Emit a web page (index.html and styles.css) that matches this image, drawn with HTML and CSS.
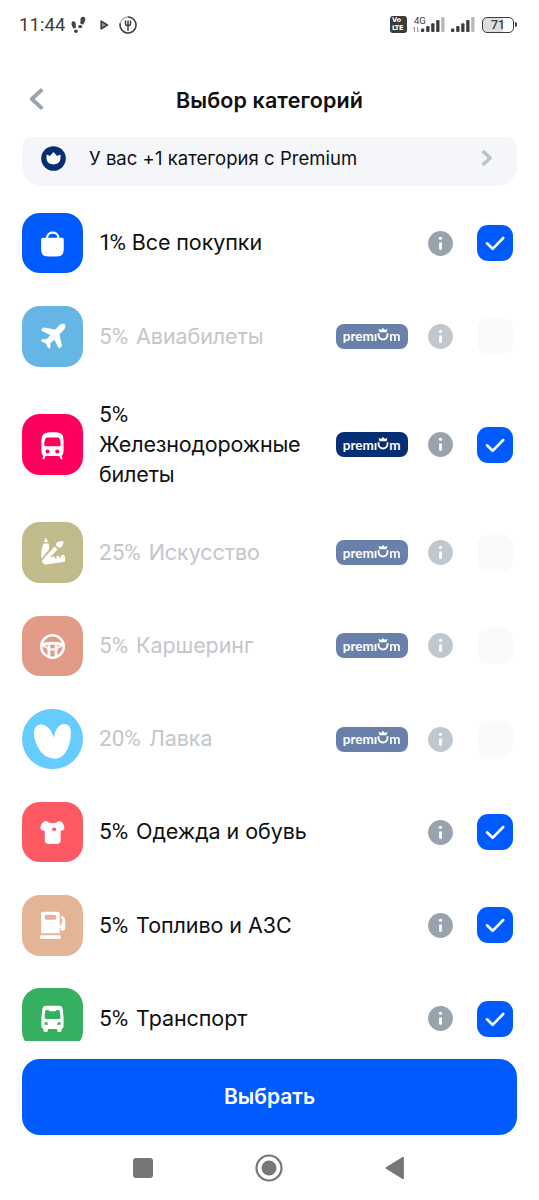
FILE: index.html
```html
<!DOCTYPE html>
<html lang="ru">
<head>
<meta charset="utf-8">
<title>Выбор категорий</title>
<link rel="stylesheet" href="styles.css">
</head>
<body>
<svg class="defs" width="0" height="0" aria-hidden="true">
  <symbol id="info" viewBox="0 0 25 25"><circle cx="12.5" cy="12.5" r="12.4" fill="#98a3af"/><circle cx="12.5" cy="7.3" r="1.6" fill="#fff"/><path d="M12.5 12.6v5" stroke="#fff" stroke-width="2.8" stroke-linecap="round"/></symbol>
  <symbol id="check" viewBox="0 0 36 36"><path d="M10 18.3l5.6 5.5L26.2 13" fill="none" stroke="#fff" stroke-width="2.6" stroke-linecap="round" stroke-linejoin="round"/></symbol>
  <symbol id="crown-u" viewBox="0 0 12 14"><path d="M1.5 5.200v1.600c0 6.300 9 6.300 9 0V5.200" fill="none" stroke="#fff" stroke-width="1.900"/><path d="M1.600.8l2.400 1.300L6 0l2 2.100L10.400.8 9.600 4.200H2.400z" fill="#fff"/></symbol>
</svg>
<div class="screen">
  <div class="status">
    <span class="time">11:44</span>
    <svg class="steps" width="15" height="18" viewBox="0 0 15 18" fill="#444"><path d="M.7 6.500C1.800 4.200 5 5.500 4.800 8.200L4.800 11.900 2.400 12.600C1.200 10.400 0 8.500.7 6.500z"/><ellipse cx="4.900" cy="15.200" rx="1.900" ry="1.700"/><path d="M9.600 2.200C10.900-.2 14.400.3 14.300 3c0 2.100-1.100 3.900-2.200 5.700L9.300 7.500z"/><ellipse cx="9.200" cy="10.600" rx="2" ry="1.700"/></svg>
    <svg class="play" width="9" height="10" viewBox="0 0 9 10"><path d="M1.200 1.200L7.400 5 1.200 8.800z" fill="#999" stroke="#444" stroke-width="1.700" stroke-linejoin="round"/></svg>
    <svg class="fork" width="18" height="18" viewBox="0 0 18 18" fill="none" stroke="#444"><circle cx="9" cy="9" r="8" stroke-width="1.300" stroke="#aaa"/><path d="M9 1a8 8 0 1 1-7.800 6.500" stroke-width="1.500"/><path d="M6.500 4.500v3.200c0 2.500 5 2.500 5 0V4.500M9 4.500V15" stroke-width="1.500"/></svg>
    <div class="status-right">
      <span class="volte"><span>Vo</span><span>LTE</span></span>
      <span class="net"><span>4G</span><svg width="8" height="5" viewBox="0 0 8 5"><path d="M2.500 5V0L.5 2M5.500 0v5l2-2" fill="none" stroke="#999" stroke-width=".9"/></svg></span>
      <svg class="signal" width="24" height="15" viewBox="0 0 24 15" fill="#3c3c3c"><rect x="0" y="11.500" width="3.300" height="3.500" rx="1"/><rect x="5.200" y="9" width="3.300" height="6" rx="1"/><rect x="10.200" y="6.200" width="3.300" height="8.800" rx="1"/><rect x="15.200" y="3" width="3.300" height="12" rx="1"/><rect x="20.200" y="0" width="3.300" height="15" rx="1" fill="#b8b8b8"/></svg>
      <svg class="signal second" width="24" height="15" viewBox="0 0 24 15" fill="#3c3c3c"><rect x="0" y="11.500" width="3.300" height="3.500" rx="1"/><rect x="5.200" y="9" width="3.300" height="6" rx="1"/><rect x="10.200" y="6.200" width="3.300" height="8.800" rx="1"/><rect x="15.200" y="3" width="3.300" height="12" rx="1"/><rect x="20.200" y="0" width="3.300" height="15" rx="1" fill="#b8b8b8"/></svg>
      <span class="battery">71</span><span class="battery-tip"></span>
    </div>
  </div>

  <header class="header">
    <svg width="17" height="24" viewBox="0 0 17 24"><path d="M14.300 2.300L3.800 12l10.500 9.700" fill="none" stroke="#9aa3ad" stroke-width="3.800" stroke-linejoin="round"/></svg>
    <h1>Выбор категорий</h1>
  </header>

  <main class="list">
    <div class="banner">
      <svg width="25" height="25" viewBox="0 0 25 25"><circle cx="12.500" cy="12.500" r="12.300" fill="#062e72"/><path d="M5.600 8.600l3.300 1.300L12.500 6l3.600 3.900 3.300-1.300c.6 5.700-.6 9.800-6.900 9.800s-7.500-4.100-6.900-9.800z" fill="#fff"/></svg>
      <span class="banner-text">У вас +1 категория с Premium</span>
      <svg class="chev" width="14" height="18" viewBox="0 0 14 18"><path d="M2.500 2l7.700 7-7.700 7" fill="none" stroke="#bcc2c9" stroke-width="3.500" stroke-linejoin="round"/></svg>
    </div>

    <div class="row">
      <div class="tile blue"><svg viewBox="0 0 60 60"><path d="M25 26v-1.800c0-6.200 11-6.200 11 0V26" fill="none" stroke="#fff" stroke-width="2.200"/><path d="M19 26.500c0-1 .8-1.800 1.800-1.800h18.900c1 0 1.800.8 1.800 1.800v9c0 6-2.300 7.700-7.300 7.700h-7.900c-5 0-7.300-1.700-7.300-7.700z" fill="#fff"/></svg></div>
      <span class="label"><span class="pct one">1%</span> Все покупки</span>
      <svg class="info"><use href="#info"/></svg>
      <span class="box on"><svg><use href="#check"/></svg></span>
    </div>
    <div class="row off">
      <div class="tile sky"><svg viewBox="0 0 60 60"><path d="M42.300 18.300c1.100 1.200.4 4-1.300 5.700L37 28l2.300 11.200c.2 1-1.600 3-2.800 2.300L32.200 33l-4.400 4.200.2 3.600c0 .7-1.300 1.600-1.800.9l-2-4.500-4.600-2.200c-.8-.6.3-1.900 1-1.900l3.700.3 4.200-4.500-8.700-4.400c-.8-1 1.200-3 2.200-2.800L33 23.800l3.800-4.100c1.600-1.700 4.300-2.500 5.500-1.400z" fill="#fff" stroke="#fff" stroke-width=".6"/></svg></div>
      <span class="label"><span class="pct">5%</span> Авиабилеты</span>
      <span class="badge"><span>premı</span><svg><use href="#crown-u"/></svg><span>m</span></span>
      <svg class="info"><use href="#info"/></svg>
      <span class="box"></span>
    </div>
    <div class="row">
      <div class="tile pink"><svg viewBox="0 0 60 60"><path fill="#fff" fill-rule="evenodd" d="M22 19.500c4-1.800 13-1.800 17 0 1.500.7 2 3 2.300 7v9.500c0 2.700-.6 5.700-3.300 5.700H22.600c-2.700 0-3.300-3-3.300-5.700v-9.500c.3-4 1.200-6.300 2.700-7zM24.800 23.300c-1.700 0-2.700 4.200-2.700 6.700 0 1.200.5 2 1.600 2h13.200c1.100 0 1.600-.8 1.600-2 0-2.500-1-6.700-2.700-6.700zM25.400 35.200a2 2 0 1 0 0 4 2 2 0 0 0 0-4zM35 35.200a2 2 0 1 0 0 4 2 2 0 0 0 0-4z"/><path d="M22.700 41l-1.300 3M38 41l1.200 3" stroke="#fff" stroke-width="2" stroke-linecap="round"/></svg></div>
      <span class="label tight"><span class="pct">5%</span> Железнодорожные билеты</span>
      <span class="badge"><span>premı</span><svg><use href="#crown-u"/></svg><span>m</span></span>
      <svg class="info"><use href="#info"/></svg>
      <span class="box on"><svg><use href="#check"/></svg></span>
    </div>
    <div class="row off">
      <div class="tile olive"><svg viewBox="0 0 60 60" fill="#fff"><path d="M23.700 15.500l1.900 3.200-.2 1.500h-3l-.3-1.500zM21.400 21.300l5.300.1.200 5.800-7.400 9c-.9-4-.2-10.800 1.900-14.900z"/><path d="M41 18.800c.3 3.900-1.200 6.900-4.800 6.900l-2.600-2.800c.4-3.500 3.800-3.800 7.400-4.100z"/><path d="M32.300 24.300l3 3-7.500 7.900 4-.8 1.100 1.900 1.500-.3v-2.300l2-.3.7 2.200 1.500-.3v-2.200l3-.4c1.400 1 1.700 5.300.9 6.800l-18.500 2.800c-2.300.3-4.100-1.900-4.200-4z"/></svg></div>
      <span class="label"><span class="pct">25%</span> Искусство</span>
      <span class="badge"><span>premı</span><svg><use href="#crown-u"/></svg><span>m</span></span>
      <svg class="info"><use href="#info"/></svg>
      <span class="box"></span>
    </div>
    <div class="row off">
      <div class="tile salmon"><svg viewBox="0 0 60 60" fill="none" stroke="#fff"><circle cx="30.300" cy="30.300" r="11.200" stroke-width="2.500"/><path d="M20.300 28.500c6-1.700 14-1.700 20 0" stroke-width="3"/><path d="M26.800 29v11.800M33.800 29v11.800" stroke-width="2.800"/><path d="M21 30c3 .5 5.500 2 5.500 5M39.600 30c-3 .5-5.500 2-5.500 5" stroke-width="1.500"/><circle cx="30.300" cy="30.500" r="1.900" fill="#e29b86" stroke="none"/><path d="M28 33.200h4.600" stroke-width="2"/></svg></div>
      <span class="label"><span class="pct">5%</span> Каршеринг</span>
      <span class="badge"><span>premı</span><svg><use href="#crown-u"/></svg><span>m</span></span>
      <svg class="info"><use href="#info"/></svg>
      <span class="box"></span>
    </div>
    <div class="row off">
      <div class="tile round"><svg viewBox="0 0 60 60"><path d="M31.700 28.500c-2-6.500-6-12.500-12-13.100-5.500-.6-8 4-7.800 9 .4 8.300 6 24.500 20.400 24.900C43.600 49.600 48.300 35 48.600 24c.1-5.400-2.200-9.200-6.700-9-6 .2-9.200 6.500-10.200 13.500z" fill="#fff"/></svg></div>
      <span class="label"><span class="pct">20%</span> Лавка</span>
      <span class="badge"><span>premı</span><svg><use href="#crown-u"/></svg><span>m</span></span>
      <svg class="info"><use href="#info"/></svg>
      <span class="box"></span>
    </div>
    <div class="row">
      <div class="tile red"><svg viewBox="0 0 60 60"><path d="M24.500 19c1.800 2.700 10 2.700 11.800 0 2.700-.3 4.800 1.800 5.800 6 .2 1.500-.3 2.700-2.200 3.200l-1.500.3v9c0 3-1.400 4.200-4.200 4.200h-7.400c-2.800 0-4.200-1.200-4.200-4.200v-9l-1.900-.3c-1.900-.5-2.600-1.700-2.300-3.200.8-4 3.400-6.300 6.100-6z" fill="#fff"/><rect x="30" y="25.600" width="4" height="3" rx="1" fill="#ff5963"/></svg></div>
      <span class="label"><span class="pct">5%</span> Одежда и обувь</span>
      <svg class="info"><use href="#info"/></svg>
      <span class="box on"><svg><use href="#check"/></svg></span>
    </div>
    <div class="row">
      <div class="tile sand"><svg viewBox="0 0 60 60"><path fill="#fff" fill-rule="evenodd" d="M21 16.700h14.300c1.300 0 2.200.9 2.200 2.200V38H19V18.900c0-1.300.7-2.200 2-2.200zM24.500 19.500c-1.300 0-2 .8-2 2v1.200c0 1.200.7 2 2 2h7.600c1.300 0 2-.8 2-2v-1.200c0-1.200-.7-2-2-2z"/><rect x="18" y="40.100" width="20.400" height="3.600" rx=".6" fill="#fff"/><path d="M39 20.600c3.400 1.200 4 3.200 4 7v5c0 2-1.300 2.900-2.700 2.900s-2-1-1.800-2.700v-4.500l1.500-.3v-4l-1.300-1.500zM37 31h1.800v1.500H37z" fill="#fff"/></svg></div>
      <span class="label"><span class="pct">5%</span> Топливо и АЗС</span>
      <svg class="info"><use href="#info"/></svg>
      <span class="box on"><svg><use href="#check"/></svg></span>
    </div>
    <div class="row">
      <div class="tile green"><svg viewBox="0 0 60 60"><path fill="#fff" fill-rule="evenodd" d="M24.500 17.700h11.700c3 0 4 1 4.400 4.300l.7 7v8.500c0 1.700-.6 2.700-2 3v1.800c0 .9-.5 1.400-1.400 1.400h-1.600c-.9 0-1.400-.5-1.400-1.400v-1.600h-9.200v1.600c0 .9-.5 1.400-1.400 1.400h-1.600c-.9 0-1.400-.5-1.400-1.400v-1.800c-1.400-.3-2-1.300-2-3V29l.8-7c.4-3.300 1.400-4.300 4.400-4.300zM24 21.800c-.8 0-1.500 4.200-1.500 6.700 0 1.500.6 2.300 2 2.300h11.700c1.400 0 2-.8 2-2.300 0-2.500-.7-6.700-1.500-6.700h-2.400c-.3 1-.8 1.200-1.700 1.200h-4.500c-.9 0-1.400-.2-1.700-1.200zM22.300 34v2.400h3.700L25 34zM38.400 34v2.400h-3.700l1-2.400z"/></svg></div>
      <span class="label"><span class="pct">5%</span> Транспорт</span>
      <svg class="info"><use href="#info"/></svg>
      <span class="box on"><svg><use href="#check"/></svg></span>
    </div>
  </main>

  <button class="submit">Выбрать</button>

  <nav class="nav">
    <svg width="20" height="20" viewBox="0 0 20 20"><rect width="20" height="20" rx="3" fill="#777"/></svg>
    <svg width="28" height="28" viewBox="0 0 28 28"><circle cx="14" cy="14" r="12.500" fill="none" stroke="#777" stroke-width="2.200"/><circle cx="14" cy="14" r="7.500" fill="#777"/></svg>
    <svg width="20" height="24" viewBox="0 0 20 24"><path d="M1.500 12L18 1.800v20.400z" fill="#777" stroke="#777" stroke-width="1.800" stroke-linejoin="round"/></svg>
  </nav>
</div>
</body>
</html>
```
FILE: styles.css
```css
* { box-sizing: border-box; }
body { margin: 0; background: #fff; font-family: Inter, Roboto, sans-serif; color: #101010; }
.defs { position: absolute; }
svg { display: block; flex: none; }
.screen { width: 539px; height: 1200px; display: flex; flex-direction: column; overflow: hidden; }

.status { height: 49px; padding: 0 22px 0 19px; display: flex; align-items: center; color: #3c3c3c; font-family: Roboto, sans-serif; }
.time { width: 47px; font-size: 18.5px; letter-spacing: 0.1px; }
.steps { margin-left: 5px; }
.play { margin-left: 14px; }
.fork { margin-left: 10px; }
.status-right { margin-left: auto; display: flex; align-items: center; }
.volte { width: 17px; height: 17px; border-radius: 3px; background: #3c3c3c; color: #fff; display: flex; flex-direction: column; justify-content: center; padding-left: 2px; font: 700 6.500px/7.500px "DejaVu Sans", sans-serif; letter-spacing: -0.3px; }
.net { width: 8px; height: 20px; margin-left: 5px; font-size: 9.5px; line-height: 12px; white-space: nowrap; }
.net span { display: block; padding-left: 2px; }
.signal { margin-left: 1px; }
.signal.second { margin-left: 6px; }
.battery { margin-left: 7px; width: 32px; height: 16px; border: 1.6px solid #3c3c3c; border-radius: 5px; background: linear-gradient(90deg, #dedede 68%, #fff 68%); font: 500 12.500px/13.500px Roboto, sans-serif; text-align: center; }
.battery-tip { width: 2px; height: 5px; margin-left: 1px; background: #3c3c3c; border-radius: 0 2px 2px 0; }

.header { height: 88px; padding: 14px 28px 0; display: grid; grid-template-columns: 17px 1fr 17px; align-items: start; }
.header svg { margin-top: 24px; }
.header h1 { margin: 22px 0 0; font-size: 21.500px; line-height: 30px; font-weight: 600; letter-spacing: 0.100px; text-align: center; white-space: nowrap; }

.list { height: 903.5px; flex: none; overflow: hidden; padding: 0 22px; }
.banner { height: 54.5px; margin: -6px 0 27.500px; padding: 0 23px 0 19px; border-radius: 20px; background: #f5f6fa; display: flex; align-items: center; }
.banner-text { flex: 1; margin-left: 23px; font-size: 18.500px; letter-spacing: 0.030px; white-space: nowrap; }
.row { min-height: 60.4px; margin-bottom: 32.8px; padding-right: 4px; display: flex; align-items: center; }
.tile { width: 60.5px; height: 60.4px; flex: none; border-radius: 18px; }
.tile svg { width: 60.4px; height: 60.4px; }
.blue { background: #005bff; }
.sky { background: #66b6e5; }
.pink { background: #ff005f; }
.olive { background: #c1ba8a; }
.salmon { background: #e29b86; }
.round { background: #66ccff; border-radius: 50%; }
.red { background: #ff5963; }
.sand { background: #e3b496; }
.green { background: #35b060; }
.label { flex: 1; min-width: 0; margin: -0.8px 0 0.8px 16.500px; padding-right: 16px; font-size: 21.500px; line-height: 30.1px; letter-spacing: -0.080px; }
.label.tight { letter-spacing: -0.180px; }
.pct { margin-right: 2px; font-family: Roboto, sans-serif; font-size: 22.500px; line-height: 1; letter-spacing: 0; }
.pct.one { letter-spacing: -2.200px; }
.off .label { color: #c3c6cb; }
.badge { width: 72px; height: 25px; flex: none; border-radius: 8px; background: #062e72; color: #fff; display: flex; align-items: center; justify-content: center; font: 700 13.500px/20px Lato, sans-serif; }
.badge svg { width: 12px; height: 14px; margin-top: -2px; }
.info { width: 25px; height: 25px; margin: 0 24.300px 0 20px; }
.off .info, .off .badge { opacity: 0.6; }
.box { width: 36px; height: 36px; flex: none; border-radius: 11px; background: #f9fafc; }
.box.on { background: #005bff; }
.box svg { width: 36px; height: 36px; }

.submit { height: 76.500px; flex: none; margin: 18px 22px 0; padding: 0; border: 0; border-radius: 18px; background: #005bff; color: #fff; font: 600 21px/30px Inter, sans-serif; }
.nav { height: 65px; padding: 0 134px 0 133px; display: flex; justify-content: space-between; align-items: center; }
```
